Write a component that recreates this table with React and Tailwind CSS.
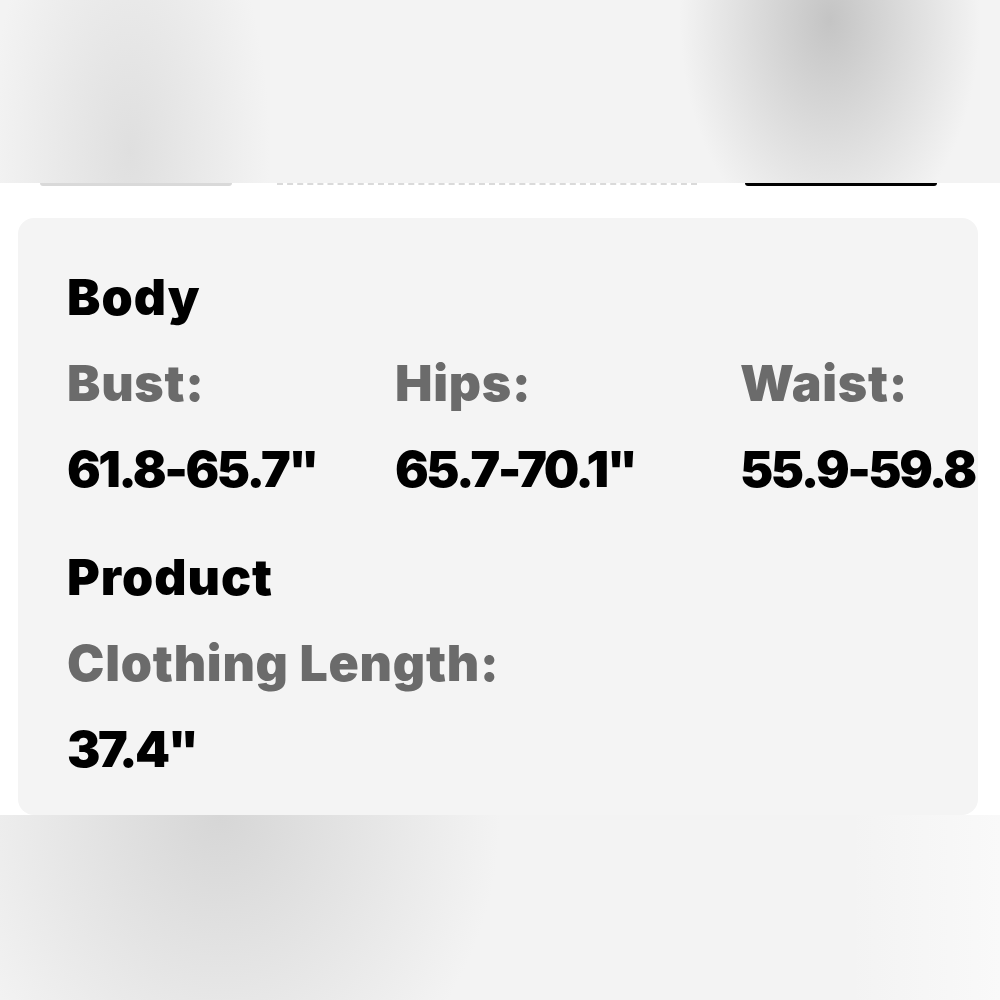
import React from "react";

const sizes = [
  { label: "Bust:", value: '61.8-65.7"' },
  { label: "Hips:", value: '65.7-70.1"' },
  { label: "Waist:", value: '55.9-59.8"' },
];

function Heading({ children }) {
  return <h2 className="text-[50px] leading-[86px] font-black text-black tracking-[0.02em]">{children}</h2>;
}

function Field({ label, value }) {
  return (
    <div className="whitespace-nowrap">
      <p className="text-[50px] leading-[86px] font-black text-[#6b6b6b] tracking-[0.015em]">{label}</p>
      <p className="text-[50px] leading-[86px] font-black text-black tracking-[-0.05em]">{value}</p>
    </div>
  );
}

export default function App() {
  return (
    <div className="w-[1000px] h-[1000px] overflow-hidden bg-white flex flex-col font-['Inter',sans-serif]">
      {/* blurred top */}
      <div className="h-[183px] shrink-0 bg-[#f3f3f3] bg-[radial-gradient(ellipse_150px_230px_at_830px_20px,#c4c4c4,transparent),radial-gradient(ellipse_140px_300px_at_130px_150px,#dfdfdf,transparent)]" />

      {/* what peeks out under the blur */}
      <div className="h-[35px] shrink-0 flex items-start px-[40px]">
        <div className="w-[192px] h-[3px] rounded-b-full bg-[#d9d9d9]" />
        <div className="ml-[45px] w-[420px] h-[2px] border-t-2 border-dashed border-[#dadada]" />
        <div className="ml-[48px] w-[192px] h-[3px] rounded-b-full bg-black" />
      </div>

      {/* size card */}
      <div className="ml-[18px] w-[960px] h-[597px] shrink-0 rounded-[16px] bg-[#f4f4f4] overflow-hidden pl-[49px] pt-[36px]">
        <Heading>Body</Heading>
        <div className="grid grid-cols-[328px_345px_1fr]">
          {sizes.map((s) => (
            <Field key={s.label} label={s.label} value={s.value} />
          ))}
        </div>
        <div className="mt-[22px]">
          <Heading>Product</Heading>
          <Field label="Clothing Length:" value={'37.4"'} />
        </div>
      </div>

      {/* blurred bottom */}
      <div className="flex-1 bg-[#f3f3f3] bg-[radial-gradient(ellipse_280px_320px_at_220px_0px,#d6d6d6,transparent),linear-gradient(to_right,transparent_85%,#f9f9f9)]" />
    </div>
  );
}
